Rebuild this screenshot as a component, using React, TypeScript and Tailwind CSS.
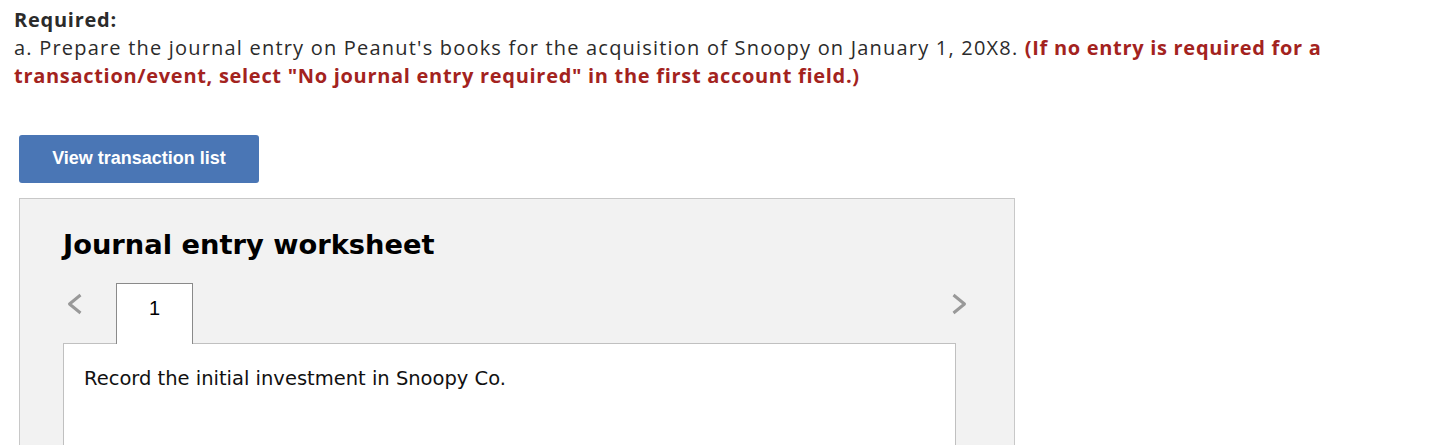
function Chevron({ dir }: { dir: "left" | "right" }) {
  return (
    <svg width="16" height="22" viewBox="0 0 16 22" className="shrink-0">
      <polyline
        points={dir === "left" ? "13.5,2 2.5,11 13.5,20" : "2.5,2 13.5,11 2.5,20"}
        fill="none"
        stroke="#999999"
        strokeWidth="3"
        strokeLinejoin="round"
      />
    </svg>
  );
}

export default function App() {
  return (
    <div className="bg-white w-[1435px] h-[445px] overflow-hidden">
      <div className="pl-[14px] pt-[6px] text-[20px] leading-[28px] text-[#2b2b2b] tracking-[1.2px] font-['Open_Sans',sans-serif]">
        <div className="font-bold tracking-[0.75px]">Required:</div>
        <div className="w-[1340px]">
          a. Prepare the journal entry on Peanut's books for the acquisition of Snoopy on January 1, 20X8.{" "}
          <span className="font-bold text-[#a3231e] tracking-[0.7px]">
            (If no entry is required for a transaction/event, select "No journal entry required" in the first account
            field.)
          </span>
        </div>
      </div>

      <button className="ml-[19px] mt-[45px] w-[240px] h-[48px] rounded-[3px] bg-[#4a76b5] text-white font-bold text-[18px] leading-[24px] pb-[2px] font-['Liberation_Sans',Arial,sans-serif]">
        View transaction list
      </button>

      <div className="ml-[19px] mt-[15px] w-[996px] h-[260px] bg-[#f2f2f2] border border-[#c8c8c8] border-b-0 pl-[43px] pr-[58px] pt-[28px]">
        <h2 className="text-[27.3px] leading-[36px] font-bold text-black font-['DejaVu_Sans',Verdana,sans-serif]">
          Journal entry worksheet
        </h2>

        <div className="mt-[20px] flex items-end justify-between">
          <div className="flex items-end">
            <div className="ml-[4px] mb-[28px]">
              <Chevron dir="left" />
            </div>
            <div className="ml-[33px] w-[77px] h-[61px] bg-white border border-[#8a8a8a] border-b-0 text-center text-[20px] leading-[24px] pt-[12px] text-black font-['Liberation_Sans',Arial,sans-serif] relative z-10 -mb-[1px]">
              1
            </div>
          </div>
          <div className="mr-[-11px] mb-[28px]">
            <Chevron dir="right" />
          </div>
        </div>

        <div className="h-[120px] bg-white border border-[#c0c0c0] border-b-0 pl-[20px] pt-[20px] text-[19.5px] text-[#111] font-['DejaVu_Sans',Verdana,sans-serif]">
          Record the initial investment in Snoopy Co.
        </div>
      </div>
    </div>
  );
}
